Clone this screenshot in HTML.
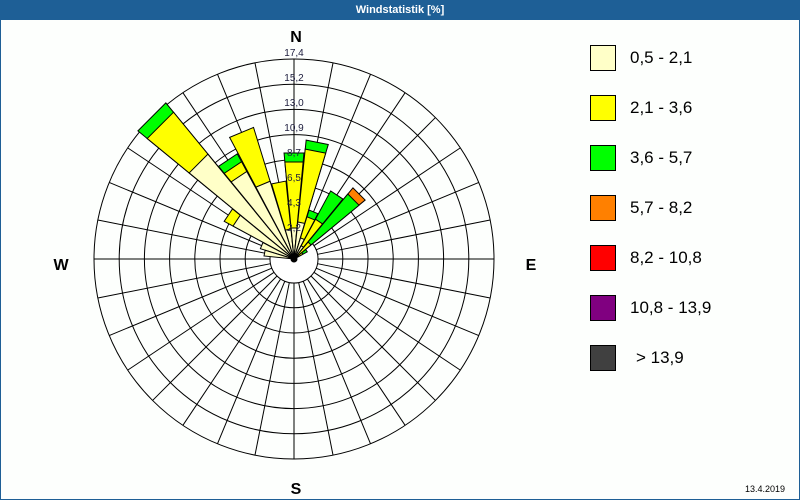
<!DOCTYPE html>
<html><head><meta charset="utf-8"><style>
body{margin:0;width:800px;height:500px;overflow:hidden;background:#fdfffd;font-family:"Liberation Sans",sans-serif}
#f{position:absolute;left:0;top:0;width:798px;height:498px;border:1px solid #1e5f96}
#t{position:absolute;left:0;top:0;width:800px;height:20px;background:#1e5f96;color:#fff;font-size:11px;line-height:20px;text-align:center;font-weight:bold}
.lg{position:absolute;left:590px;width:24px;height:24px;border:1px solid #000}
.lt{position:absolute;left:630px;font-size:17px;color:#000}
polygon{vector-effect:non-scaling-stroke}
</style></head><body>
<div id="f"></div>
<div id="t">Windstatistik [%]</div>
<svg width="800" height="500" style="position:absolute;left:0;top:0">
<g transform="translate(294,259)" fill="none" stroke="#000" stroke-width="1">
<circle r="200"/><circle r="174.8"/><circle r="149.6"/><circle r="124.4"/><circle r="99.2"/><circle r="74"/><circle r="48.8"/>
<g id="sp">
<line y1="-24" y2="-200"/><line y1="-24" y2="-200" transform="rotate(11.25)"/><line y1="-24" y2="-200" transform="rotate(22.5)"/><line y1="-24" y2="-200" transform="rotate(33.75)"/><line y1="-24" y2="-200" transform="rotate(45)"/><line y1="-24" y2="-200" transform="rotate(56.25)"/><line y1="-24" y2="-200" transform="rotate(67.5)"/><line y1="-24" y2="-200" transform="rotate(78.75)"/>
</g>
<use href="#sp" transform="rotate(90)"/><use href="#sp" transform="rotate(180)"/><use href="#sp" transform="rotate(270)"/>
<circle r="24" fill="#fff"/>
<g stroke-width="1">
<g transform="rotate(-45) scale(1.25,1)"><polygon points="0,0 -15.8,-201 15.8,-201" fill="#00ff00"/><polygon points="0,0 -14.9,-189 14.9,-189" fill="#ffff00"/><polygon points="0,0 -10.6,-135 10.6,-135" fill="#ffffc8"/></g>
<g transform="rotate(-33.75) scale(1.2,1)"><polygon points="0,0 -9.4,-119 9.4,-119" fill="#00ff00"/><polygon points="0,0 -8.7,-110 8.7,-110" fill="#ffff00"/><polygon points="0,0 -7.8,-99 7.8,-99" fill="#ffffc8"/></g>
<g transform="rotate(-22.5) scale(1.2,1)"><polygon points="0,0 -10.8,-137 10.8,-137" fill="#ffff00"/><polygon points="0,0 -6.4,-81 6.4,-81" fill="#ffffc8"/></g>
<g transform="rotate(-11.25) scale(1.2,1)"><polygon points="0,0 -6.1,-78 6.1,-78" fill="#ffff00"/><polygon points="0,0 -2.4,-30 2.4,-30" fill="#ffffc8"/></g>
<g transform="scale(1.2,1)"><polygon points="0,0 -8.3,-106 8.3,-106" fill="#00ff00"/><polygon points="0,0 -7.6,-97 7.6,-97" fill="#ffff00"/><polygon points="0,0 -2.4,-31 2.4,-31" fill="#ffffc8"/></g>
<g transform="rotate(11.25) scale(1.2,1)"><polygon points="0,0 -9.4,-119 9.4,-119" fill="#00ff00"/><polygon points="0,0 -8.7,-110 8.7,-110" fill="#ffff00"/><polygon points="0,0 -2.9,-37 2.9,-37" fill="#ffffc8"/></g>
<g transform="rotate(22.5) scale(1.2,1)"><polygon points="0,0 -4,-51 4,-51" fill="#00ff00"/><polygon points="0,0 -3.5,-44 3.5,-44" fill="#ffff00"/><polygon points="0,0 -1.7,-22 1.7,-22" fill="#ffffc8"/></g>
<g transform="rotate(33.75) scale(1.2,1)"><polygon points="0,0 -6.1,-77 6.1,-77" fill="#00ff00"/><polygon points="0,0 -3.5,-45 3.5,-45" fill="#ffff00"/><polygon points="0,0 -1.2,-15 1.2,-15" fill="#ffffc8"/></g>
<g transform="rotate(45) scale(1.2,1)"><polygon points="0,0 -7.2,-92 7.2,-92" fill="#ff8000"/><polygon points="0,0 -6.6,-84 6.6,-84" fill="#00ff00"/><polygon points="0,0 -1.7,-22 1.7,-22" fill="#ffff00"/></g>
<g transform="rotate(56.25) scale(1.2,1)"><polygon points="0,0 -1.2,-15 1.2,-15" fill="#00ff00"/><polygon points="0,0 -0.8,-10 0.8,-10" fill="#ffff00"/></g>
<g transform="rotate(-56.25) scale(1.2,1)"><polygon points="0,0 -6.2,-79 6.2,-79" fill="#ffff00"/><polygon points="0,0 -5.4,-69 5.4,-69" fill="#ffffc8"/></g>
<g transform="rotate(-67.5) scale(1.2,1)"><polygon points="0,0 -2.8,-35 2.8,-35" fill="#ffffc8"/></g>
<g transform="rotate(-78.75) scale(1.2,1)"><polygon points="0,0 -2.4,-30 2.4,-30" fill="#ffffc8"/></g>
</g>
<circle r="3" fill="#000"/>
</g>
<g font-family="Liberation Sans, sans-serif" font-size="10" fill="#202040" text-anchor="middle">
<text x="294" y="56">17,4</text><text x="294" y="81">15,2</text><text x="294" y="106">13,0</text><text x="294" y="131">10,9</text><text x="294" y="156">8,7</text><text x="294" y="181">6,5</text><text x="294" y="206">4,3</text><text x="294" y="231">2,2</text>
</g>
<g font-family="Liberation Sans, sans-serif" font-size="16" font-weight="bold" fill="#000" text-anchor="middle">
<text x="296" y="42">N</text><text x="61" y="270">W</text><text x="531" y="270">E</text><text x="296" y="494">S</text>
</g>
<text x="785" y="492" font-family="Liberation Sans, sans-serif" font-size="9" text-anchor="end" fill="#000">13.4.2019</text>
</svg>
<div class="lg" style="top:45px;background:#ffffc8"></div><div class="lt" style="top:48px">0,5 - 2,1</div>
<div class="lg" style="top:95px;background:#ffff00"></div><div class="lt" style="top:98px">2,1 - 3,6</div>
<div class="lg" style="top:145px;background:#00ff00"></div><div class="lt" style="top:148px">3,6 - 5,7</div>
<div class="lg" style="top:195px;background:#ff8000"></div><div class="lt" style="top:198px">5,7 - 8,2</div>
<div class="lg" style="top:245px;background:#ff0000"></div><div class="lt" style="top:248px">8,2 - 10,8</div>
<div class="lg" style="top:295px;background:#800080"></div><div class="lt" style="top:298px">10,8 - 13,9</div>
<div class="lg" style="top:345px;background:#404040"></div><div class="lt" style="top:348px;left:636px">&gt; 13,9</div>
</body></html>
